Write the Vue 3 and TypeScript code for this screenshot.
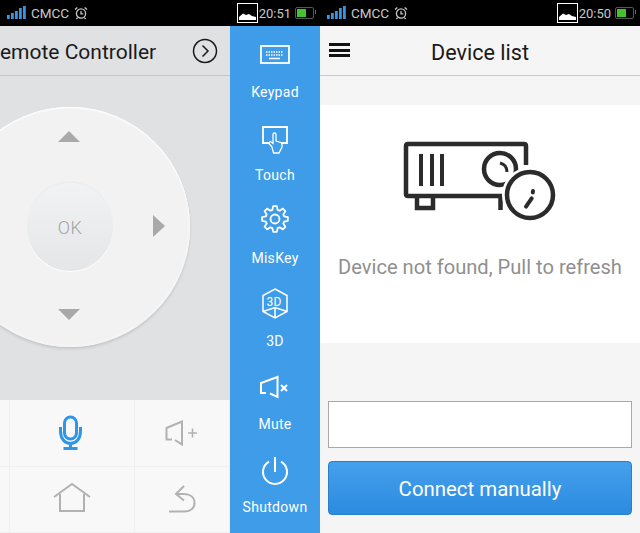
<script setup lang="ts">
const sideItems = ['Keypad', 'Touch', 'MisKey', '3D', 'Mute', 'Shutdown']

// outline of an 8 tooth gear round (17, 16)
function gearOutline(cx: number, cy: number, outer: number, root: number) {
  const pts: string[] = []
  const at = (deg: number, r: number) => {
    const rad = (deg * Math.PI) / 180
    return `${(cx + r * Math.cos(rad)).toFixed(2)} ${(cy + r * Math.sin(rad)).toFixed(2)}`
  }
  for (let i = 0; i < 8; i++) {
    const a = -90 + i * 45
    pts.push(at(a - 16, root), at(a - 8, outer), at(a + 8, outer), at(a + 16, root))
  }
  return `M${pts.join('L')}Z`
}

const gearPath = gearOutline(17, 16, 13, 9.5)
</script>

<template>
  <div class="screen">
    <section class="phone">
      <div class="status">
        <div class="status-left">
          <svg class="signal" viewBox="0 0 20 14" width="20" height="14">
            <rect x="0" y="9" width="2.8" height="4" />
            <rect x="4" y="7" width="2.8" height="6" />
            <rect x="8" y="5" width="2.8" height="8" />
            <rect x="12" y="2" width="2.8" height="11" />
            <rect x="16" y="0" width="2.8" height="13" />
          </svg>
          <span>CMCC</span>
          <svg class="alarm" viewBox="0 0 14 14" width="14" height="14">
            <circle cx="7" cy="7.5" r="4.6" />
            <path d="M7 5v2.8h2.2M1 3.6L3.4 1.4M13 3.6L10.6 1.4M3.6 11.6L2.4 13M10.4 11.6L11.6 13" />
          </svg>
        </div>
        <div class="status-right">
          <svg class="pic" viewBox="0 0 21 20" width="21" height="20">
            <rect x="0.5" y="0.5" width="20" height="19" fill="#000" stroke="#fff" />
            <path d="M2 17V14L6 10.5L9 12L12 11L15 13L19 14V17Z" fill="#fff" />
          </svg>
          <span>20:51</span>
          <div class="battery"><i></i></div>
        </div>
      </div>
      <div class="remote-body">
        <div class="remote-main">
          <header class="remote-head">
            <h1>Remote Controller</h1>
            <svg class="go" viewBox="0 0 26 26" width="26" height="26">
              <circle cx="13" cy="13" r="11.5" />
              <path d="M10.5 7.5L16 13L10.5 18.5" />
            </svg>
          </header>
          <div class="pad">
            <div class="wheel">
              <span class="arrow up"></span>
              <span class="arrow right"></span>
              <span class="arrow down"></span>
              <div class="ok">OK</div>
            </div>
          </div>
          <div class="keys">
            <div class="key"></div>
            <div class="key">
              <svg class="nudge" viewBox="0 0 24 36" width="24" height="36" fill="none" stroke="#2f95e6" stroke-width="3">
                <rect x="5.5" y="2" width="12" height="22" rx="6" />
                <path d="M1.5 12V16C1.5 24 6 28.5 11.5 28.5C17 28.5 21.5 24 21.5 16V12M11.5 28.5V33M4.5 33.5H18.5" />
              </svg>
            </div>
            <div class="key">
              <svg viewBox="0 0 34 26" width="34" height="26" fill="none" stroke="#b2b2b2" stroke-width="2">
                <path d="M7 19.5H1.5V8L17 1.5V24.5L10 20" />
                <path d="M23 13H32M27.5 8.5V17.5" stroke-width="1.6" />
              </svg>
            </div>
            <div class="key"></div>
            <div class="key">
              <svg class="lift" viewBox="0 0 38 30" width="38" height="30" fill="none" stroke="#b2b2b2" stroke-width="2">
                <path d="M1 14L19 1L37 14M7 11V28H31V11" />
              </svg>
            </div>
            <div class="key">
              <svg class="lift" viewBox="0 0 28 30" width="28" height="30" fill="none" stroke="#b2b2b2" stroke-width="2">
                <path d="M16 3L8 11L16 17.5M9 11H16C22.5 11 26.5 14.5 26.5 20C26.5 25 22.5 28.5 17 28.5H1" />
              </svg>
            </div>
          </div>
        </div>
        <nav class="side">
          <div v-for="item in sideItems" :key="item" class="side-item">
            <svg class="side-icon" viewBox="0 0 34 34" width="34" height="34" fill="none" stroke="#fff" stroke-width="1.8">
              <template v-if="item === 'Keypad'">
                <rect x="3" y="9" width="28" height="17" />
                <path d="M8 15H25M8 18H25" stroke-dasharray="1.5 1" stroke-width="1.4" />
                <path d="M11 21.5H22" stroke-width="1.5" />
              </template>
              <template v-else-if="item === 'Touch'">
                <path d="M12 23H5V7H29V23H23" />
                <path d="M14 27L10.5 23L12.5 21.5L15 23.5V14.5C15 12.5 18 12.5 18 14.5V21L24 23V27L21 33H15.5Z" stroke-width="1.3" />
              </template>
              <template v-else-if="item === 'MisKey'">
                <path :d="gearPath" stroke-linejoin="round" />
                <circle cx="17" cy="16" r="4.5" />
              </template>
              <template v-else-if="item === '3D'">
                <path d="M17 3L29 9.5V25.5L17 32L5 25.500V9.5ZM5 25.5L17 21.5L29 25.5M17 21.5V32" stroke-width="1.5" />
                <text x="8.500" y="19.500" class="cube-text">3D</text>
              </template>
              <template v-else-if="item === 'Mute'">
                <path d="M8 24H3V14L19.5 8V28L12 24.5" stroke-width="2" />
                <path d="M23 16L29 22M29 16L23 22" stroke-width="2" />
              </template>
              <template v-else>
                <path d="M17 5V20M11 9.6A12 12 0 1 0 23 9.6" stroke-width="2" />
              </template>
            </svg>
            <span>{{ item }}</span>
          </div>
        </nav>
      </div>
    </section>

    <section class="phone">
      <div class="status">
        <div class="status-left">
          <svg class="signal" viewBox="0 0 20 14" width="20" height="14">
            <rect x="0" y="9" width="2.8" height="4" />
            <rect x="4" y="7" width="2.8" height="6" />
            <rect x="8" y="5" width="2.8" height="8" />
            <rect x="12" y="2" width="2.8" height="11" />
            <rect x="16" y="0" width="2.8" height="13" />
          </svg>
          <span>CMCC</span>
          <svg class="alarm" viewBox="0 0 14 14" width="14" height="14">
            <circle cx="7" cy="7.5" r="4.6" />
            <path d="M7 5v2.8h2.2M1 3.6L3.4 1.4M13 3.6L10.6 1.4M3.6 11.6L2.4 13M10.4 11.6L11.6 13" />
          </svg>
        </div>
        <div class="status-right">
          <svg class="pic" viewBox="0 0 21 20" width="21" height="20">
            <rect x="0.5" y="0.5" width="20" height="19" fill="#000" stroke="#fff" />
            <path d="M2 17V14L6 10.5L9 12L12 11L15 13L19 14V17Z" fill="#fff" />
          </svg>
          <span>20:50</span>
          <div class="battery"><i></i></div>
        </div>
      </div>
      <header class="list-head">
        <div class="burger"><i></i><i></i><i></i></div>
        <h1>Device list</h1>
      </header>
      <div class="empty">
        <svg class="projector" viewBox="0 0 160 90" width="160" height="90" fill="none" stroke="#2b2b2b" stroke-width="4.5">
          <path d="M126 27V8Q126 6 124 6H8Q6 6 6 8V56Q6 58 8 58H102" />
          <path d="M17 58V70H33V58M100.5 58V72" />
          <path d="M21 16V48M32 16V48M42 16V48" stroke-width="4" />
          <circle cx="100" cy="31" r="16" />
          <path d="M100 25C104 26 107 29 107 34" stroke-width="3" />
          <circle cx="130" cy="57" r="28" fill="#fff" stroke="none" />
          <circle cx="130" cy="57" r="23" />
          <path d="M133 53L132.8 54.5M131.7 60.3L126 68.7" stroke-width="4" stroke-linecap="round" />
        </svg>
        <p>Device not found, Pull to refresh</p>
      </div>
      <div class="connect">
        <div class="address"></div>
        <button class="connect-btn">Connect manually</button>
      </div>
    </section>
  </div>
</template>

<style scoped>
.screen {
  display: flex;
  width: 640px;
  height: 533px;
  overflow: hidden;
  font-family: Roboto, "Liberation Sans", sans-serif;
}
.phone {
  display: flex;
  flex-direction: column;
  width: 320px;
  height: 533px;
  overflow: hidden;
  background: #f5f5f5;
}
.status {
  display: flex;
  flex: none;
  align-items: center;
  justify-content: space-between;
  height: 26px;
  padding: 0 4px 0 7px;
  background: #000;
  color: #c8c8c8;
  font-size: 13.5px;
}
.status-left,
.status-right {
  display: flex;
  align-items: center;
}
.signal {
  margin-right: 4px;
  fill: #3b93e4;
}
.alarm {
  margin-left: 5px;
  fill: none;
  stroke: #c4c4c4;
  stroke-width: 1.3;
}
.pic {
  margin-right: 1px;
}
.status-right span {
  font-size: 13px;
}
.battery {
  position: relative;
  width: 19px;
  height: 12px;
  margin: 0 2px 0 4px;
  padding: 1px;
  box-sizing: border-box;
  border: 1px solid #555;
  border-radius: 2px;
}
.battery::after {
  position: absolute;
  top: 2px;
  right: -3px;
  width: 1px;
  height: 4px;
  background: #666;
  content: "";
}
.battery i {
  display: block;
  width: 9px;
  height: 100%;
  background: #46c12f;
}
.remote-body {
  display: flex;
  flex: 1;
  min-height: 0;
}
.remote-main {
  display: flex;
  flex-direction: column;
  width: 230px;
  background: #e0e1e3;
}
.remote-head {
  display: flex;
  flex: none;
  align-items: center;
  justify-content: space-between;
  height: 50px;
  padding: 1px 12px 0 0;
  box-sizing: border-box;
  overflow: hidden;
  border-bottom: 1px solid #c6c6c6;
}
.remote-head h1 {
  margin: 2px 0 0 -13px;
  color: #1a1a1a;
  font-size: 21px;
  font-weight: 400;
  white-space: nowrap;
}
.go {
  fill: none;
  stroke: #1a1a1a;
  stroke-width: 1.5;
}
.pad {
  display: flex;
  flex: none;
  align-items: flex-start;
  height: 324px;
  overflow: hidden;
}
.wheel {
  position: relative;
  display: flex;
  flex: none;
  align-items: center;
  justify-content: center;
  width: 240px;
  height: 240px;
  margin: 31px 0 0 -50px;
  border-radius: 50%;
  background: #f2f2f2;
  box-shadow: 0 2px 3px rgba(0, 0, 0, 0.12), inset 0 1px 1px #fff, inset 0 0 0 2px #f5f5f5;
}
.ok {
  display: flex;
  align-items: center;
  justify-content: center;
  width: 86px;
  height: 88px;
  border-radius: 50%;
  background: linear-gradient(#f1f2f3, #e4e6e8);
  box-shadow: 0 1px 1px #fff, 0 -1px 2px rgba(0, 0, 0, 0.04);
  color: #a3a3a3;
  font-size: 18px;
  font-weight: 300;
  letter-spacing: 0.5px;
}
.arrow {
  position: absolute;
  width: 0;
  height: 0;
}
.arrow.up {
  top: 24px;
  left: 108px;
  border-right: 11px solid transparent;
  border-bottom: 11px solid #a9a9a9;
  border-left: 11px solid transparent;
}
.arrow.down {
  bottom: 27px;
  left: 108px;
  border-top: 11px solid #a9a9a9;
  border-right: 11px solid transparent;
  border-left: 11px solid transparent;
}
.arrow.right {
  top: 108px;
  right: 25px;
  border-top: 11px solid transparent;
  border-bottom: 11px solid transparent;
  border-left: 12px solid #a9a9a9;
}
.keys {
  display: grid;
  flex: 1;
  grid-template-columns: 10px 125px 95px;
  grid-template-rows: 67px 66px;
  background: #f8f8f8;
}
.key {
  display: flex;
  align-items: center;
  justify-content: center;
  border-right: 1px solid #f0f0f0;
  border-bottom: 1px solid #f0f0f0;
}
.nudge {
  margin-right: 3px;
}
.lift {
  margin-bottom: 4px;
}
.side {
  display: flex;
  flex-direction: column;
  width: 90px;
  padding-top: 7px;
  background: #3f9ce9;
}
.side-item {
  display: flex;
  flex: none;
  flex-direction: column;
  align-items: center;
  height: 83px;
  padding-top: 4px;
  box-sizing: border-box;
  color: #fff;
  font-size: 14px;
  line-height: 16px;
  letter-spacing: 0.3px;
}
.side-icon {
  margin-bottom: 13px;
}
.cube-text {
  fill: #fff;
  stroke: none;
  font-size: 12px;
}
.list-head {
  position: relative;
  display: flex;
  flex: none;
  align-items: center;
  justify-content: center;
  height: 50px;
  padding-top: 3px;
  box-sizing: border-box;
  border-bottom: 1px solid #c9c9c9;
}
.list-head h1 {
  margin: 0;
  color: #1a1a1a;
  font-size: 21.6px;
  font-weight: 400;
}
.burger {
  position: absolute;
  top: 17px;
  left: 9px;
  display: flex;
  flex-direction: column;
  gap: 2.5px;
}
.burger i {
  display: block;
  width: 21px;
  height: 3px;
  background: #111;
}
.empty {
  display: flex;
  flex: none;
  flex-direction: column;
  align-items: center;
  height: 238px;
  margin-top: 29px;
  padding-top: 33px;
  box-sizing: border-box;
  background: #fff;
}
.empty p {
  margin: 27px 0 0;
  color: #8f8f8f;
  font-size: 20.1px;
  white-space: nowrap;
}
.connect {
  display: flex;
  flex-direction: column;
  gap: 13px;
  padding: 58px 8px 0;
}
.address {
  height: 47px;
  box-sizing: border-box;
  border: 1px solid #a9a9a9;
  background: #fff;
}
.connect-btn {
  height: 54px;
  padding: 2px 0 0;
  border: 1px solid #2a7fc9;
  border-radius: 4px;
  background: linear-gradient(#46a0ec, #2b8be0);
  color: #fff;
  font-family: inherit;
  font-size: 20.4px;
}
</style>
